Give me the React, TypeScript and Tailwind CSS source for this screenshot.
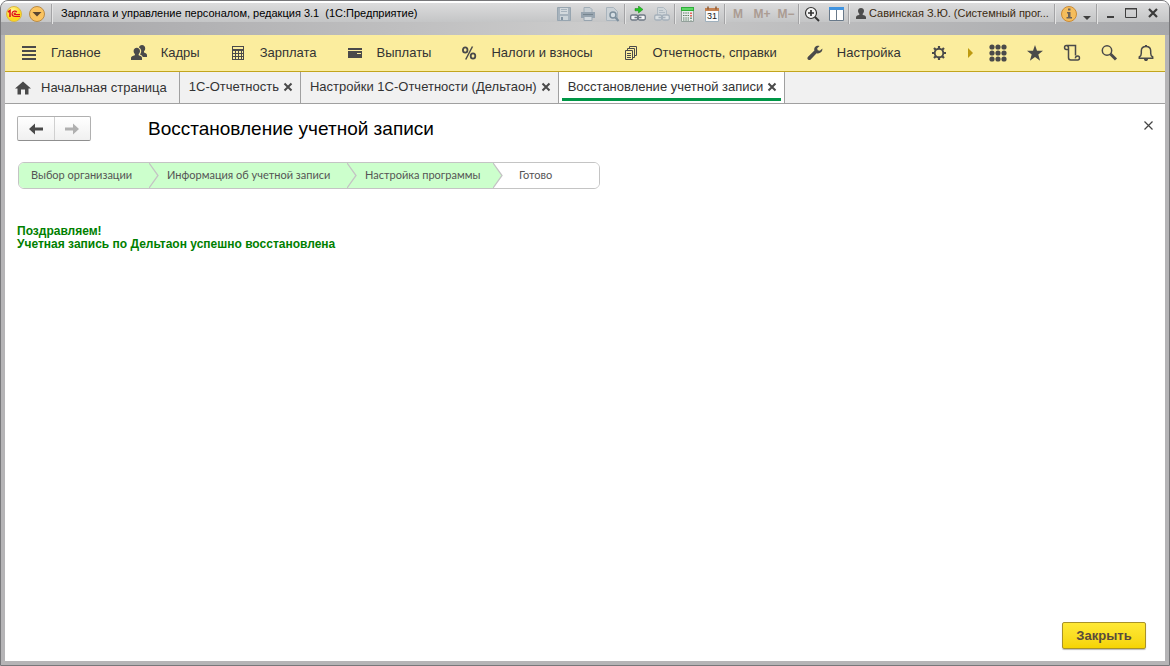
import React from 'react'

const GRAY = '#4a4a4a'

type IconProps = { children: React.ReactNode; size?: number }

const Icon = ({ children, size = 16 }: IconProps) => (
  <svg width={size} height={size} viewBox={`0 0 ${size} ${size}`} fill={GRAY} className="shrink-0" aria-hidden="true">
    {children}
  </svg>
)

const menuItems = [
  {
    label: 'Главное',
    icon: <path d="M1 1h14v2H1zM1 5h14v2H1zM1 9h14v2H1zM1 13h14v2H1z" />,
  },
  {
    label: 'Кадры',
    icon: (
      <>
        <path d="M11 0c1.900 0 3.200 1.300 3.200 3.200 0 1.400-.5 2.400-1.200 3v1.200c1.700.7 3 1.200 3 2.600v2h-4.200c-.3-1.300-1.300-2-2.800-2.600.8-1 1.200-2 1.200-3.300 0-1.600-.9-3-2.300-3.600C8.300 1 9.400 0 11 0z" />
        <path d="M5.800 2.800C7.700 2.800 9 4.200 9 6c0 1.400-.6 2.400-1.300 3v1.200c1.800.7 3.300 1.300 3.300 2.600V15H0v-2.200c0-1.300 1.800-1.900 3.900-2.600V9C3.200 8.400 2.600 7.400 2.600 6c0-1.800 1.300-3.200 3.200-3.200z" />
      </>
    ),
  },
  {
    label: 'Зарплата',
    icon: (
      <path
        fillRule="evenodd"
        d="M2 1h12v14H2zM3 2v2h10V2zM3 6v2h2V6zm3 0v2h2V6zm3 0v2h2V6zm3 0v2h1V6zM3 9v2h2V9zm3 0v2h2V9zm3 0v2h2V9zm3 0v2h1V9zM3 12v2h2v-2zm3 0v2h2v-2zm3 0v2h2v-2zm3 0v2h1v-2z"
      />
    ),
  },
  {
    label: 'Выплаты',
    icon: <path fillRule="evenodd" d="M1 3h14v2H1zM1 6h14v7H1zM10 8v1h4V8z" />,
  },
  {
    label: 'Налоги и взносы',
    icon: (
      <g fill="none" stroke={GRAY}>
        <ellipse cx="4.200" cy="5" rx="2.300" ry="2.700" strokeWidth="1.800" />
        <ellipse cx="12" cy="11" rx="2.300" ry="2.700" strokeWidth="1.800" />
        <path d="M11.500 1.500 4.700 14.500" strokeWidth="1.500" />
      </g>
    ),
  },
  {
    label: 'Отчетность, справки',
    icon: (
      <path
        d="M2.500 5.500h7v9h-7zM4.500 5V3.500h7v9H10M6.500 3V1.500h7v9H12M4 8.500h4M4 10.500h4M4 12.500h4"
        fill="none"
        stroke={GRAY}
      />
    ),
  },
  {
    label: 'Настройка',
    icon: (
      <path d="M15.300 3.500 12.900 5.700l-2.200-.5-.5-2L12.600 1c-1.800-.6-3.500-.2-4.500 1-.9 1-1.100 2.300-.7 3.600L1 11.700c-.8.8-.8 2 0 2.800s2 .8 2.700 0l5.900-6.300c1.500.5 3.100.2 4.300-.9 1.200-1 1.700-2.300 1.400-3.800z" />
    ),
  },
]

const tabs = [
  { label: '1С-Отчетность', active: false },
  { label: 'Настройки 1С-Отчетности (Дельтаон)', active: false },
  { label: 'Восстановление учетной записи', active: true },
]

const Separator = () => <span className="h-5 w-0.5 shrink-0 border-l border-r border-l-[#a3a3a5] border-r-[#e4e4e4]" />

const ToolButton = ({ label, children }: { label: string; children: React.ReactNode }) => (
  <button
    type="button"
    aria-label={label}
    className="flex h-5 w-6 shrink-0 items-center justify-center text-[12px] font-bold text-[#ab9c93]"
  >
    {children}
  </button>
)

const Printer = () => (
  <svg width="16" height="16" viewBox="0 0 16 16" aria-hidden="true">
    <path d="M4 6V1.500h6L12 3.500V6" fill="#c9d0d5" stroke="#a0adb7" />
    <path d="M1 6h14v6H1z" fill="#97a4af" />
    <path d="M3 8.500h10" stroke="#76858f" />
    <path d="M4 10.500h8v4H4z" fill="#d3d9dd" stroke="#97a4af" />
  </svg>
)

const TitleBar = () => (
  <header className="flex h-[34px] items-start bg-linear-to-r from-[#a5a5a8] via-[#cbcbcb] to-[#a7a8ab]">
    <div className="flex h-[21px] min-w-0 flex-1 items-center border-t-2 border-white bg-linear-to-b from-[#dcdcdd] to-[#c4c5c6]">
      <div className="flex min-w-0 flex-1 items-center pt-0.5">
        <svg width="18" height="18" viewBox="0 0 18 18" className="ml-1 shrink-0" aria-hidden="true">
          <defs>
            <radialGradient id="logo" cx="40%" cy="30%">
              <stop offset="0" stopColor="#fff9a8" />
              <stop offset="1" stopColor="#ffd91c" />
            </radialGradient>
          </defs>
          <circle cx="9" cy="9" r="7.500" fill="url(#logo)" stroke="#d8b64a" />
          <path d="M3 7 5 5.500V12" fill="none" stroke="#e0151b" strokeWidth="1.600" />
          <path
            d="M11.800 7.200C11 5.700 7.200 5.500 7 8.800c0 2 1.500 2.700 3 2.700h5M10.800 8.500c-1-.8-2 0-1.600.7.300.5 1 .5 1.800.5h4"
            fill="none"
            stroke="#e0151b"
            strokeWidth="1.200"
          />
        </svg>
        <button type="button" aria-label="Главное меню" className="ml-1 flex size-5 shrink-0 items-center justify-center">
          <svg width="18" height="18" viewBox="0 0 18 18" aria-hidden="true">
            <circle cx="9" cy="9" r="7.500" fill="#fbc460" stroke="#b98a45" />
            <path d="M4.500 7h9L9 11.500z" fill="#5b4630" />
          </svg>
        </button>
        <span className="ml-1 flex">
          <Separator />
        </span>
        <h1 className="ml-2 min-w-0 flex-1 truncate text-[11px] whitespace-pre text-black">
          {'Зарплата и управление персоналом, редакция 3.1  (1С:Предприятие)'}
        </h1>

        <ToolButton label="Сохранить">
          <svg width="16" height="16" viewBox="0 0 16 16" aria-hidden="true">
            <path d="M1.500 1.500h13v13h-13z" fill="#a7b3bd" stroke="#97a5b0" />
            <path d="M4 2h8v6H4z" fill="#d3d9dd" />
            <path d="M5 3.500h6M5 5.500h6" stroke="#a7b3bd" />
            <path d="M4 10h8v4H4z" fill="#cbd3d8" />
            <path d="M5 11h2v3H5z" fill="#8494a2" />
          </svg>
        </ToolButton>
        <ToolButton label="Печать">
          <Printer />
        </ToolButton>
        <ToolButton label="Предварительный просмотр">
          <svg width="16" height="16" viewBox="0 0 16 16" aria-hidden="true">
            <path d="M2.500 1.500h7l4 4v9h-11z" fill="#cbd2d7" stroke="#a9b4bd" />
            <circle cx="9" cy="9" r="3" fill="#d4dde3" stroke="#7c8e9c" strokeWidth="1.500" />
            <path d="m11.500 11.500 3 3.500" stroke="#7c8e9c" strokeWidth="2" />
          </svg>
        </ToolButton>
        <Separator />
        <ToolButton label="Получить ссылку">
          <svg width="16" height="16" viewBox="0 0 16 16" aria-hidden="true">
            <path d="M5 2.500h3.500V0L13 3.500 8.500 7V4.800H5z" fill="#22c522" stroke="#168016" strokeWidth=".5" />
            <rect x=".7" y="9" width="7" height="5" rx="1.500" fill="#f4f5f6" stroke="#6f7985" strokeWidth="1.300" />
            <rect x="8.300" y="9" width="7" height="5" rx="1.500" fill="#f4f5f6" stroke="#6f7985" strokeWidth="1.300" />
            <path d="M4.500 11.500h7" stroke="#6f7985" strokeWidth="1.500" />
          </svg>
        </ToolButton>
        <ToolButton label="Перейти по ссылке">
          <svg width="16" height="16" viewBox="0 0 16 16" aria-hidden="true">
            <path d="M3.500 9V1.500h6l3 3V9" fill="#d0d6da" stroke="#b0bac2" />
            <path d="M5 4.500h4M5 6.500h6" stroke="#b0bac2" />
            <rect x=".7" y="9" width="7" height="5" rx="1.500" fill="#dadfe2" stroke="#a5b0ba" strokeWidth="1.300" />
            <rect x="8.300" y="9" width="7" height="5" rx="1.500" fill="#dadfe2" stroke="#a5b0ba" strokeWidth="1.300" />
            <path d="M4.500 11.500h7" stroke="#a5b0ba" strokeWidth="1.500" />
          </svg>
        </ToolButton>
        <Separator />
        <ToolButton label="Калькулятор">
          <svg width="16" height="16" viewBox="0 0 16 16" aria-hidden="true">
            <path d="M1.500 1.500h12v14h-12z" fill="#e9eeec" stroke="#93a09b" />
            <path d="M1 1h13v4H1z" fill="#2fae3a" />
            <path d="M2 2h11v2H2z" fill="#5fd866" />
            <path d="M3 7h6M3 9.500h6M3 12h6M3 14h6" stroke="#5c7a63" strokeWidth="1.200" strokeDasharray="1.500 .8" />
            <path d="M11 6.500v4" stroke="#df3b2f" strokeWidth="1.500" strokeDasharray="1.500 1" />
            <path d="M11 11.500v3" stroke="#5c7a63" strokeWidth="1.500" strokeDasharray="1.500 1" />
          </svg>
        </ToolButton>
        <ToolButton label="Календарь">
          <svg width="16" height="16" viewBox="0 0 16 16" aria-hidden="true">
            <path d="M1.500 2.500h13v13h-13z" fill="#fbfbfb" stroke="#9fb0bd" />
            <path d="M1 2h14v3H1z" fill="#c58150" />
            <path d="M4 .5v3M12 .5v3" stroke="#8d5a34" strokeWidth="1.500" />
            <text x="8" y="13" textAnchor="middle" fontSize="9" fontWeight="normal" fill="#222">
              31
            </text>
          </svg>
        </ToolButton>
        <Separator />
        <ToolButton label="Занести в память">M</ToolButton>
        <ToolButton label="Прибавить к памяти">M+</ToolButton>
        <ToolButton label="Вычесть из памяти">M−</ToolButton>
        <Separator />
        <ToolButton label="Масштаб">
          <svg width="16" height="16" viewBox="0 0 16 16" fill="none" stroke="#333" aria-hidden="true">
            <circle cx="7" cy="7" r="5.500" fill="#f3f3f3" strokeWidth="1.200" />
            <path d="M4 7h6M7 4v6" strokeWidth="1.700" />
            <path d="m11 11 4 4" strokeWidth="2" />
          </svg>
        </ToolButton>
        <ToolButton label="Панели">
          <svg width="16" height="16" viewBox="0 0 16 16" aria-hidden="true">
            <path d="M1.500 1.500h14v13h-14z" fill="#fff" stroke="#68798a" />
            <path d="M1 1h15v3H1z" fill="#3f93e0" />
            <path d="M8.500 4v10" stroke="#68798a" />
          </svg>
        </ToolButton>
        <Separator />
        <a href="#user" className="ml-1 flex w-[200px] shrink-0 items-center text-[11px] text-[#3b2a10]">
          <svg width="12" height="12" viewBox="0 0 12 12" className="mr-0.5 ml-px shrink-0" aria-hidden="true">
            <path
              d="M6 0c1.800 0 3 1.200 3 2.800 0 1.400-.6 2.400-1.300 3V7c2 .3 3.300 1 3.300 2.200V11H1V9.200C1 8 2.300 7.300 4.300 7V5.800C3.600 5.200 3 4.200 3 2.800 3 1.200 4.200 0 6 0z"
              fill="#4c4c4c"
            />
          </svg>
          <span className="truncate">Савинская З.Ю. (Системный прог...</span>
        </a>
        <Separator />
        <button type="button" aria-label="Информация" className="ml-1 flex h-5 shrink-0 items-center">
          <svg width="18" height="18" viewBox="0 0 18 18" aria-hidden="true">
            <circle cx="9" cy="9" r="7.500" fill="#f5bd5c" stroke="#c98a35" />
            <path d="M8 3.500h2.500v2H8zM7 7h3.500v5H12v1.500H6.500V12H8V8.500H7z" fill="#6c6258" />
          </svg>
          <svg width="10" height="18" viewBox="0 0 10 18" className="mx-1" aria-hidden="true">
            <path d="M1 11h8l-4 4z" fill="#3f3f3f" />
          </svg>
        </button>
        <Separator />
      </div>
      <div className="flex items-center gap-2.5 pr-2.5 pl-2">
        <button type="button" aria-label="Свернуть">
          <svg width="9" height="12" viewBox="0 0 9 12" aria-hidden="true">
            <path d="M1 9h7v2H1z" fill="#3f3f3f" />
          </svg>
        </button>
        <button type="button" aria-label="Развернуть">
          <svg width="12" height="12" viewBox="0 0 12 12" aria-hidden="true">
            <path d="M.5 1.500h11v9H.5z" fill="none" stroke="#3f3f3f" />
            <path d="M0 1h12v1.500H0z" fill="#3f3f3f" />
          </svg>
        </button>
        <button type="button" aria-label="Закрыть окно">
          <svg width="12" height="12" viewBox="0 0 12 12" aria-hidden="true">
            <path d="m2 2 8 8M10 2l-8 8" stroke="#3a3a3a" strokeWidth="2.200" />
          </svg>
        </button>
      </div>
    </div>
  </header>
)

const MenuBar = () => (
  <nav className="flex h-[37px] items-center border-b border-[#c2a51d] bg-[#fbed9e] pl-4">
    <div className="flex min-w-0 flex-1 items-center gap-[30px] overflow-hidden whitespace-nowrap">
      {menuItems.map((item) => (
        <a key={item.label} href="#section" className="flex shrink-0 items-center gap-3.5">
          <Icon>{item.icon}</Icon>
          {item.label}
        </a>
      ))}
      <button type="button" aria-label="Настройка панели" className="shrink-0">
        <Icon>
          <circle cx="8" cy="8" r="4.300" fill="none" stroke={GRAY} strokeWidth="1.900" />
          <path
            d="M8 1v3M8 12v3M1 8h3M12 8h3M3 3l2 2M11 11l2 2M13 3l-2 2M5 11l-2 2"
            stroke={GRAY}
            strokeWidth="2.200"
          />
        </Icon>
      </button>
    </div>
    <button type="button" aria-label="Прокрутить вправо" className="mr-3.5">
      <svg width="8" height="10" viewBox="0 0 8 10" aria-hidden="true">
        <path d="M1 0v10l5-5z" fill="#bd9a10" />
      </svg>
    </button>
    <div className="flex items-center gap-[19px] pr-2.5">
      <button type="button" aria-label="Меню функций">
        <Icon size={18}>
          {[3, 9, 15].map((y) => [3, 9, 15].map((x) => <circle key={`${x}-${y}`} cx={x} cy={y} r="2.600" />))}
        </Icon>
      </button>
      <button type="button" aria-label="Избранное">
        <Icon size={18}>
          <path d="m9 1 2 5.800h6L12.300 10.500l1.800 6.200L9 13.100l-5.100 3.600 1.800-6.200L1 6.800h6z" />
        </Icon>
      </button>
      <button type="button" aria-label="История">
        <Icon size={18}>
          <path
            d="M5 5.500H3.300C1 5.500 1 1.500 3.300 1.500h9.200v10M3.300 1.500C5 1.500 5.500 2.500 5.500 4v9.500c0 1.500.8 2.500 2.300 2.500h7C17 16 17 12 14.800 12c-1.800 0-2.500 1-2.300 2.300"
            fill="none"
            stroke={GRAY}
            strokeWidth="1.500"
          />
        </Icon>
      </button>
      <button type="button" aria-label="Поиск">
        <Icon size={18}>
          <circle cx="7" cy="6.500" r="4.700" fill="none" stroke={GRAY} strokeWidth="1.500" />
          <path d="m10.500 10 5.500 5.500" stroke={GRAY} strokeWidth="3" />
        </Icon>
      </button>
      <button type="button" aria-label="Оповещения">
        <Icon size={18}>
          <path
            d="M2.300 14.300h13.400V13c-1.400-.8-2-2-2-3.800V7c0-2.800-1.700-4.500-4.700-4.500S4.300 4.200 4.300 7v2.200c0 1.800-.6 3-2 3.800z"
            fill="none"
            stroke={GRAY}
            strokeWidth="1.500"
          />
          <path d="M8 1h2v2H8zM7 15h4c0 1.500-.8 2-2 2s-2-.5-2-2z" />
        </Icon>
      </button>
    </div>
  </nav>
)

const TabBar = () => (
  <div className="flex h-8 items-stretch border-b border-[#a0a0a0] bg-[#f1f1f1] whitespace-nowrap">
    <button type="button" className="flex items-center gap-2.5 border-r border-[#a0a0a0] pr-3 pl-2.5">
      <Icon>
        <path d="m8 1.500 8 7h-2.500V14.500H10v-5H6v5H2.500V8.500H0z" />
      </Icon>
      Начальная страница
    </button>
    {tabs.map((tab) => (
      <div
        key={tab.label}
        className={`flex border-r border-[#a0a0a0] px-[3px] pb-0.5 ${tab.active ? 'bg-white' : ''}`}
      >
        <div
          className={`flex items-center gap-1 border-b-3 pt-1 pr-1 pl-1.5 ${
            tab.active ? 'border-[#009646]' : 'border-transparent'
          }`}
        >
          <button type="button">{tab.label}</button>
          <button type="button" aria-label={`Закрыть: ${tab.label}`}>
            <svg width="10" height="10" viewBox="0 0 10 10" aria-hidden="true">
              <path d="m1.500 1.500 7 7M8.500 1.500l-7 7" stroke={GRAY} strokeWidth="2" />
            </svg>
          </button>
        </div>
      </div>
    ))}
  </div>
)

const Chevron = ({ next }: { next: string }) => (
  <svg width="10" height="25" viewBox="0 0 10 25" className="shrink-0" aria-hidden="true">
    <path d="M0 0h10v25H0z" fill={next} />
    <path d="M0 0 9 12.500 0 25z" fill="#ccffcc" />
    <path d="M0 0 9 12.500 0 25" fill="none" stroke="#c4c4c4" strokeWidth="1.300" />
  </svg>
)

const Steps = () => (
  <ol className="mt-[21px] ml-px flex h-[27px] w-fit items-stretch overflow-hidden rounded-md border border-[#c4c4c4] font-['Lato','Noto_Sans',sans-serif] text-[11px] text-[#555]">
    <li className="flex w-[140px] bg-[#ccffcc]">
      <span className="flex flex-1 items-center pl-3">Выбор организации</span>
      <Chevron next="#ccffcc" />
    </li>
    <li className="flex w-[198px] bg-[#ccffcc]">
      <span className="flex flex-1 items-center pl-2">Информация об учетной записи</span>
      <Chevron next="#ccffcc" />
    </li>
    <li className="flex w-[146px] bg-[#ccffcc]">
      <span className="flex flex-1 items-center pl-2">Настройка программы</span>
      <Chevron next="#ffffff" />
    </li>
    <li className="flex w-24 items-center bg-white pl-4">Готово</li>
  </ol>
)

const App: React.FC = () => {
  return (
    <div className="flex min-h-screen flex-col overflow-hidden rounded-t-lg border border-[#77777a] bg-[#b5b4b6] font-['Liberation_Sans',Arial,sans-serif] text-[13px] text-[#333]">
      <TitleBar />
      <div className="mx-1 mb-1 flex flex-1 flex-col bg-white">
        <MenuBar />
        <TabBar />
        <main className="flex flex-1 flex-col px-3 pt-3">
          <div className="flex items-center">
            <div className="flex h-[25px] w-[74px] shrink-0 rounded-xs border border-[#b0b0b0] border-b-[#8f8f8f] bg-linear-to-b from-white to-[#f0f0f0]">
              <button
                type="button"
                aria-label="Назад"
                className="flex flex-1 items-center justify-center border-r border-[#d0d0d0]"
              >
                <svg width="14" height="12" viewBox="0 0 14 12" aria-hidden="true">
                  <path d="M6 .5V4.500h8v3H6v4L0 6z" fill={GRAY} />
                </svg>
              </button>
              <button type="button" aria-label="Вперед" className="flex flex-1 items-center justify-center">
                <svg width="14" height="12" viewBox="0 0 14 12" aria-hidden="true">
                  <path d="M8 .5V4.500H0v3h8v4l6-5.500z" fill="#b0b0b0" />
                </svg>
              </button>
            </div>
            <h2 className="ml-[57px] flex-1 text-[19px] leading-6 text-black">Восстановление учетной записи</h2>
            <button type="button" aria-label="Закрыть форму" className="self-start pt-[5px]">
              <svg width="9" height="9" viewBox="0 0 9 9" aria-hidden="true">
                <path d="m.5.5 8 8M8.500.5l-8 8" stroke="#444" strokeWidth="1.200" />
              </svg>
            </button>
          </div>

          <Steps />

          <p className="mt-9 text-[12px] leading-[13px] font-bold text-[#008000]">
            Поздравляем!
            <br />
            Учетная запись по Дельтаон успешно восстановлена
          </p>

          <div className="mt-auto flex justify-end pr-[7px] pb-3">
            <button
              type="button"
              className="h-[27px] w-[84px] rounded-xs border border-[#a8922a] bg-linear-to-b from-[#ffe935] to-[#f5d400] font-bold text-[#5a4a3c] shadow-[0_1px_1px_#bbb]"
            >
              Закрыть
            </button>
          </div>
        </main>
      </div>
    </div>
  )
}

export default App
